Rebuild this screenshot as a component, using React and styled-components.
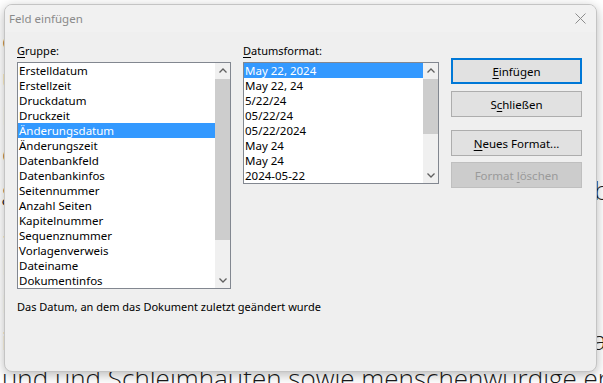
import React from 'react';
import styled, { createGlobalStyle } from 'styled-components';

const groups = [
  'Erstelldatum',
  'Erstellzeit',
  'Druckdatum',
  'Druckzeit',
  'Änderungsdatum',
  'Änderungszeit',
  'Datenbankfeld',
  'Datenbankinfos',
  'Seitennummer',
  'Anzahl Seiten',
  'Kapitelnummer',
  'Sequenznummer',
  'Vorlagenverweis',
  'Dateiname',
  'Dokumentinfos',
];

const formats = [
  'May 22, 2024',
  'May 22, 24',
  '5/22/24',
  '05/22/24',
  '05/22/2024',
  'May 24',
  'May 24',
  '2024-05-22',
];

const docLines = [
  'ehrenamtlich kümmern wir uns um die Kranken',
  'und bieten jedem Menschen eine sichere Heimat',
  'Innerhalb der Gemeinde helfen wir zu jeder Zeit',
  'ehrenamtlich mit viel Liebe und Herz (siehe oben)',
  'gegen Hunger und Not, mit Nahrung und Wasser ab',
  '. Dazu gehören auch Kleidung und Medizin (laut',
  'Einrichtung für Bedürftige in der ganzen Stadt',
  'Hilfe für Familien, Kinder und ältere Menschen da',
  'in Zusammenarbeit mit Ärzten und Pflegekräften da',
  'und und Schleimhäuten sowie menschenwürdige ent',
];

const GlobalStyle = createGlobalStyle`
  html, body {
    margin: 0;
    padding: 0;
    background: #ffffff;
  }
`;

const Page = styled.div`
  position: relative;
  width: 603px;
  height: 383px;
  overflow: hidden;
  background: #ffffff;
`;

const DocText = styled.div`
  padding-top: 22px;
  padding-left: 2px;
  font-family: 'Open Sans', 'Noto Sans', sans-serif;
  font-weight: 300;
  font-size: 26px;
  line-height: 37.5px;
  color: #1a1a1a;
  white-space: nowrap;
`;

const Dialog = styled.div`
  position: absolute;
  left: 4px;
  top: 4px;
  width: 591px;
  height: 366px;
  display: flex;
  flex-direction: column;
  background: #efefef;
  border: 1px solid #c4c4c4;
  border-radius: 8px;
  box-shadow: 0 3px 12px rgba(0, 0, 0, 0.28);
  font-family: 'Noto Sans', 'Open Sans', sans-serif;
  font-size: 11px;
  color: #000;
  overflow: hidden;
`;

const TitleBar = styled.div`
  height: 27px;
  display: flex;
  align-items: center;
  justify-content: space-between;
  padding: 0 8px 0 4px;
  background: #f1f1f1;
`;

const Title = styled.span`
  color: #8a8a8a;
  font-size: 11.5px;
`;

const CloseIcon = styled.svg`
  width: 11px;
  height: 11px;
  margin-right: 2px;
`;

const Body = styled.div`
  padding: 11px 12px 0 12px;
  display: flex;
  flex-direction: column;
`;

const Row = styled.div`
  display: flex;
  align-items: flex-start;
`;

const Column = styled.div`
  display: flex;
  flex-direction: column;
  width: ${p => p.$width}px;
  margin-right: 12px;
`;

const Label = styled.div`
  height: 15px;
  line-height: 15px;
  margin-bottom: 4px;
`;

const Key = styled.span`
  text-decoration: underline;
  text-underline-offset: 2px;
`;

const ListBox = styled.div`
  display: flex;
  border: 1px solid #828790;
  background: #fff;
  height: ${p => p.$rows * 15}px;
`;

const Items = styled.div`
  flex: 1;
  display: flex;
  flex-direction: column;
`;

const Item = styled.div`
  height: 15px;
  line-height: 15px;
  padding-left: 1px;
  font-size: 11.5px;
  white-space: nowrap;
  background: ${p => (p.$selected ? '#3399ff' : 'transparent')};
  color: ${p => (p.$selected ? '#ffffff' : '#000000')};
`;

const ScrollBar = styled.div`
  width: 15px;
  display: flex;
  flex-direction: column;
  background: #f0f0f0;
`;

const Arrow = styled.div`
  height: 15px;
  display: flex;
  align-items: center;
  justify-content: center;
`;

const Track = styled.div`
  flex: 1;
  display: flex;
  flex-direction: column;
`;

const Thumb = styled.div`
  height: ${p => p.$size}px;
  margin: 1px 0 0 0;
  background: #cdcdcd;
`;

const Buttons = styled.div`
  display: flex;
  flex-direction: column;
  width: 131px;
  padding-top: 15px;
`;

const Button = styled.div`
  height: ${p => (p.$primary ? 22 : 24)}px;
  margin-top: ${p => p.$gap || 0}px;
  display: flex;
  align-items: center;
  justify-content: center;
  font-size: 11.5px;
  background: ${p => (p.$disabled ? '#cccccc' : '#e1e1e1')};
  border: ${p => (p.$primary ? '2px solid #0078d7' : p.$disabled ? '1px solid #bfbfbf' : '1px solid #adadad')};
  color: ${p => (p.$disabled ? '#9a9a9a' : '#000')};
`;

const Description = styled.div`
  margin-top: 10px;
  height: 15px;
  line-height: 15px;
`;

const Chevron = ({ up }) => (
  <svg width="8" height="5" viewBox="0 0 8 5">
    <path
      d={up ? 'M0.5 4.5 L4 1 L7.5 4.5' : 'M0.5 0.5 L4 4 L7.5 0.5'}
      fill="none"
      stroke="#606060"
      strokeWidth="1.3"
    />
  </svg>
);

const List = ({ items, selected, rows, thumb }) => (
  <ListBox $rows={rows}>
    <Items>
      {items.map((item, i) => (
        <Item key={i} $selected={i === selected}>{item}</Item>
      ))}
    </Items>
    <ScrollBar>
      <Arrow><Chevron up /></Arrow>
      <Track>
        <Thumb $size={thumb} />
      </Track>
      <Arrow><Chevron /></Arrow>
    </ScrollBar>
  </ListBox>
);

const App = () => (
  <Page>
    <GlobalStyle />
    <DocText>
      {docLines.map((line, i) => (
        <div key={i}>{line}</div>
      ))}
    </DocText>
    <Dialog>
      <TitleBar>
        <Title>Feld einfügen</Title>
        <CloseIcon viewBox="0 0 11 11">
          <path d="M0.5 0.5 L10.5 10.5 M10.5 0.5 L0.5 10.5" stroke="#8c8c8c" strokeWidth="1" />
        </CloseIcon>
      </TitleBar>
      <Body>
        <Row>
          <Column $width={214}>
            <Label><Key>G</Key>ruppe:</Label>
            <List items={groups} selected={4} rows={15} thumb={161} />
          </Column>
          <Column $width={196}>
            <Label><Key>D</Key>atumsformat:</Label>
            <List items={formats} selected={0} rows={8} thumb={55} />
          </Column>
          <Buttons>
            <Button $primary><span><Key>E</Key>infügen</span></Button>
            <Button $gap={7}><span>S<Key>c</Key>hließen</span></Button>
            <Button $gap={13}><span><Key>N</Key>eues Format...</span></Button>
            <Button $gap={6} $disabled><span>Format <Key>l</Key>öschen</span></Button>
          </Buttons>
        </Row>
        <Description>Das Datum, an dem das Dokument zuletzt geändert wurde</Description>
      </Body>
    </Dialog>
  </Page>
);

export default App;
